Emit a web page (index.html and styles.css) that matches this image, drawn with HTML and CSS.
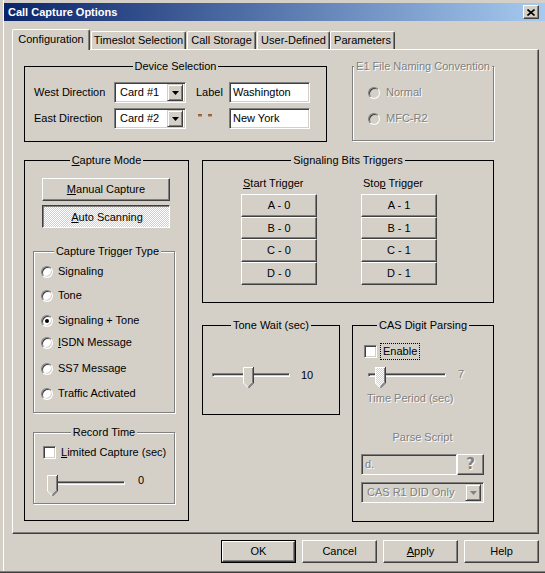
FILE: index.html
```html
<!DOCTYPE html>
<html>
<head>
<meta charset="utf-8">
<title>Call Capture Options</title>
<link rel="stylesheet" href="styles.css">
</head>
<body>
<div class="window">
  <div class="titlebar">
    <span class="title">Call Capture Options</span>
    <span class="close-btn"><svg width="8" height="7" viewBox="0 0 8 7"><path d="M0.5 0.5L7.5 6.5M7.5 0.5L0.5 6.5" stroke="#000" stroke-width="1.6"/></svg></span>
  </div>
  <div class="client">
    <div class="tabs">
      <div class="tab active">Configuration</div>
      <div class="tab w-ts">Timeslot Selection</div>
      <div class="tab w-cs">Call Storage</div>
      <div class="tab w-ud">User-Defined</div>
      <div class="tab w-pa">Parameters</div>
    </div>
    <div class="page">
      <div class="row-top">
        <div class="group black grp-device">
          <div class="gtitle">Device Selection</div>
          <div class="device-grid">
            <span class="lbl">West Direction</span>
            <div class="combo"><span class="combo-text">Card #1</span><span class="dd-btn"><svg width="7" height="4" viewBox="0 0 7 4"><path d="M0 0H7L3.5 4Z" fill="#000"/></svg></span></div>
            <span class="lbl lbl-label">Label</span>
            <div class="textbox">Washington</div>
            <span class="lbl">East Direction</span>
            <div class="combo"><span class="combo-text">Card #2</span><span class="dd-btn"><svg width="7" height="4" viewBox="0 0 7 4"><path d="M0 0H7L3.5 4Z" fill="#000"/></svg></span></div>
            <span class="lbl lbl-quote">"&nbsp;&nbsp;"</span>
            <div class="textbox">New York</div>
          </div>
        </div>
        <div class="group etched grp-e1">
          <div class="gtitle disabled">E1 File Naming Convention</div>
          <div class="opt e1-first"><span class="radio dis"></span><span class="disabled">Normal</span></div>
          <div class="opt e1-second"><span class="radio dis"></span><span class="disabled">MFC-R2</span></div>
        </div>
      </div>
      <div class="row-main">
        <div class="group black grp-capture">
          <div class="gtitle"><u>C</u>apture Mode</div>
          <div class="btn cm-btn cm-manual"><u>M</u>anual Capture</div>
          <div class="btn pushed cm-btn cm-auto"><span class="pushed-text"><u>A</u>uto Scanning</span></div>
          <div class="group etched grp-trigger">
            <div class="gtitle">Capture Trigger Type</div>
            <div class="opt tr r1"><span class="radio"></span><span>Signaling</span></div>
            <div class="opt tr r2"><span class="radio"></span><span>Tone</span></div>
            <div class="opt tr r3"><span class="radio checked"></span><span>Signaling + Tone</span></div>
            <div class="opt tr r4"><span class="radio"></span><span><u>I</u>SDN Message</span></div>
            <div class="opt tr r5"><span class="radio"></span><span>SS7 Message</span></div>
            <div class="opt tr r6"><span class="radio"></span><span>Traffic Activated</span></div>
          </div>
          <div class="group etched grp-record">
            <div class="gtitle">Record Time</div>
            <div class="opt rec-check"><span class="checkbox"></span><span><u>L</u>imited Capture (sec)</span></div>
            <div class="slider-row rec-slider">
              <div class="slider">
                <div class="track"></div>
                <svg class="thumb" style="left:0px" width="11" height="21" viewBox="0 0 11 21"><path d="M0 0H11V16L5.5 21.5L0 16Z" fill="#D4D0C8"/><path d="M0.5 16V0.5H10" stroke="#fff" fill="none"/><path d="M0.5 16L5 20.5" stroke="#fff" fill="none"/><path d="M10.5 0V16L5.5 21" stroke="#404040" fill="none"/><path d="M9.5 1V15.6L5.5 19.6" stroke="#808080" fill="none"/></svg>
              </div>
              <span class="slider-val rec-val">0</span>
            </div>
          </div>
        </div>
        <div class="col-right">
          <div class="group black grp-sig">
            <div class="gtitle">Signaling Bits Triggers</div>
            <div class="trig-cols">
              <div class="trig-col">
                <div class="trig-label"><u>S</u>tart Trigger</div>
                <div class="btn tb tb1">A - 0</div>
                <div class="btn tb tb2">B - 0</div>
                <div class="btn tb tb3">C - 0</div>
                <div class="btn tb tb4">D - 0</div>
              </div>
              <div class="trig-col">
                <div class="trig-label">Sto<u>p</u> Trigger</div>
                <div class="btn tb tb1">A - 1</div>
                <div class="btn tb tb2">B - 1</div>
                <div class="btn tb tb3">C - 1</div>
                <div class="btn tb tb4">D - 1</div>
              </div>
            </div>
          </div>
          <div class="row-low">
            <div class="group black grp-tone">
              <div class="gtitle">Tone Wait (sec)</div>
              <div class="slider-row tone-slider">
                <div class="slider">
                  <div class="track"></div>
                  <svg class="thumb" style="left:31px" width="11" height="21" viewBox="0 0 11 21"><path d="M0 0H11V16L5.5 21.5L0 16Z" fill="#D4D0C8"/><path d="M0.5 16V0.5H10" stroke="#fff" fill="none"/><path d="M0.5 16L5 20.5" stroke="#fff" fill="none"/><path d="M10.5 0V16L5.5 21" stroke="#404040" fill="none"/><path d="M9.5 1V15.6L5.5 19.6" stroke="#808080" fill="none"/></svg>
                </div>
                <span class="slider-val tone-val">10</span>
              </div>
            </div>
            <div class="group black grp-cas">
              <div class="gtitle">CAS Digit Parsing</div>
              <div class="opt cas-check"><span class="checkbox"></span><span class="focus">Enable</span></div>
              <div class="slider-row cas-slider">
                <div class="slider">
                  <div class="track"></div>
                  <svg class="thumb" style="left:7px" width="11" height="21" viewBox="0 0 11 21"><defs><pattern id="dith" width="2" height="2" patternUnits="userSpaceOnUse"><rect width="2" height="2" fill="#D4D0C8"/><rect width="1" height="1" fill="#fff"/><rect x="1" y="1" width="1" height="1" fill="#fff"/></pattern></defs><path d="M0 0H11V16L5.5 21.5L0 16Z" fill="url(#dith)"/><path d="M0.5 16V0.5H10" stroke="#fff" fill="none"/><path d="M0.5 16L5 20.5" stroke="#fff" fill="none"/><path d="M10.5 0V16L5.5 21" stroke="#404040" fill="none"/><path d="M9.5 1V15.6L5.5 19.6" stroke="#808080" fill="none"/></svg>
                </div>
                <span class="slider-val cas-val disabled">7</span>
              </div>
              <div class="cas-period disabled">Time Period (sec)</div>
              <div class="cas-parse disabled">Parse Script</div>
              <div class="cas-input">
                <div class="textbox dis-box"><span class="disabled">d.</span></div>
                <div class="btn qbtn"><span class="qmark">?</span></div>
              </div>
              <div class="combo dis-box cas-combo"><span class="combo-text disabled">CAS R1 DID Only</span><span class="dd-btn"><svg width="7" height="4" viewBox="0 0 7 4"><path d="M0 0H7L3.5 4Z" fill="#808080"/></svg></span></div>
            </div>
          </div>
        </div>
      </div>
    </div>
    <div class="buttons">
      <div class="default-wrap"><div class="btn dlg-btn">OK</div></div>
      <div class="btn dlg-btn">Cancel</div>
      <div class="btn dlg-btn"><u>A</u>pply</div>
      <div class="btn dlg-btn">Help</div>
    </div>
  </div>
</div>
</body>
</html>
```
FILE: styles.css
```css
html, body {
  margin: 0;
  padding: 0;
}
body {
  width: 545px;
  height: 573px;
  overflow: hidden;
  background: #D4D0C8;
  font-family: "Liberation Sans", Arial, sans-serif;
  font-size: 11px;
  line-height: 13px;
  color: #000;
}
u { text-decoration: underline; text-underline-offset: 1px; }

.window {
  box-sizing: border-box;
  width: 549px;
  height: 573px;
  padding: 3px 0 0 4px;
  background: #D4D0C8;
  box-shadow: inset 0 -1px #404040, inset 0 -2px #808080, inset 3px 0 #D4D0C8, inset 4px 0 #fff;
}
.titlebar {
  height: 18px;
  display: flex;
  align-items: center;
  justify-content: space-between;
  padding: 0 4px 0 4px;
  background: linear-gradient(to right, #0A246A, #A6CAF0);
  margin-right: 4px;
}
.title {
  color: #fff;
  font-weight: bold;
  font-size: 11px;
}
.close-btn {
  box-sizing: border-box;
  width: 16px;
  height: 14px;
  display: flex;
  align-items: center;
  justify-content: center;
  background: #D4D0C8;
  border: 1px solid;
  border-color: #fff #404040 #404040 #fff;
  box-shadow: inset -1px -1px #808080;
  margin-right: 2px;
}

.client {
  padding-top: 8px;
}
.tabs {
  display: flex;
  align-items: flex-end;
  height: 20px;
  padding-left: 8px;
}
.tab {
  box-sizing: border-box;
  height: 18px;
  border-top: 1px solid #fff;
  border-left: 1px solid #fff;
  border-right: 1px solid #404040;
  box-shadow: inset -1px 0 #808080;
  border-top-left-radius: 2px;
  border-top-right-radius: 2px;
  text-align: center;
  padding-top: 2px;
  background: #D4D0C8;
}
.tab.active {
  position: relative;
  z-index: 1;
  width: 78px;
  height: 21px;
  margin-bottom: -1px;
  padding-top: 3px;
}
.w-ts { width: 95px; margin-left: 1px; }
.w-cs { width: 69px; margin-left: 1px; }
.w-ud { width: 73px; margin-left: 1px; }
.w-pa { width: 65px; }

.page {
  box-sizing: border-box;
  width: 527px;
  height: 485px;
  margin-left: 8px;
  border-top: 1px solid #fff;
  border-left: 1px solid #fff;
  border-right: 1px solid #404040;
  border-bottom: 1px solid #404040;
  box-shadow: inset -1px -1px #808080;
  padding: 16px 0 0 11px;
}

/* group boxes */
.group {
  box-sizing: border-box;
  border: 1px solid #000;
}
.group.etched {
  border-color: #808080;
  box-shadow: inset 1px 1px #fff, 1px 1px #fff;
}
.gtitle {
  width: fit-content;
  margin: -7px auto 0;
  padding: 0 2px;
  background: #D4D0C8;
  line-height: 13px;
  white-space: nowrap;
}
.disabled {
  color: #808080;
  text-shadow: 1px 1px 0 #fff;
}

.row-top {
  display: flex;
  gap: 25px;
}
.grp-device { width: 303px; height: 76px; }
.grp-e1 { width: 142px; height: 75px; }

.device-grid {
  display: grid;
  grid-template-columns: 80px 72px 43px 81px;
  grid-template-rows: 21px 21px;
  row-gap: 5px;
  margin-top: 9px;
  padding-left: 9px;
  align-items: center;
}
.lbl { white-space: nowrap; }
.lbl-label { padding-left: 10px; }
.lbl-quote { padding-left: 12px; }

.combo, .textbox {
  box-sizing: border-box;
  height: 21px;
  border: 1px solid;
  border-color: #808080 #fff #fff #808080;
  box-shadow: inset 1px 1px #404040, inset -1px -1px #D4D0C8;
  background: #fff;
  display: flex;
  align-items: center;
  padding: 2px;
  white-space: nowrap;
}
.textbox { padding-left: 3px; }
.combo-text { flex: 1; padding-left: 3px; }
.dd-btn {
  box-sizing: border-box;
  width: 16px;
  height: 17px;
  background: #D4D0C8;
  border: 1px solid;
  border-color: #D4D0C8 #404040 #404040 #D4D0C8;
  box-shadow: inset 1px 1px #fff, inset -1px -1px #808080;
  display: flex;
  align-items: center;
  justify-content: center;
}
.dd-btn svg { display: block; }
.dis-box { background: #D4D0C8; }

/* options */
.opt {
  display: flex;
  align-items: center;
  height: 13px;
  white-space: nowrap;
}
.radio {
  box-sizing: border-box;
  width: 12px;
  height: 12px;
  border-radius: 50%;
  border: 1px solid;
  border-color: #808080 #fff #fff #808080;
  box-shadow: inset 1px 1px #404040, inset -1px -1px #D4D0C8;
  background: #fff;
  margin-right: 5px;
  display: flex;
  align-items: center;
  justify-content: center;
  flex: none;
}
.radio.dis { background: #D4D0C8; margin-right: 6px; }
.radio.checked::after {
  content: "";
  width: 4px;
  height: 4px;
  border-radius: 50%;
  background: #000;
}
.checkbox {
  box-sizing: border-box;
  width: 13px;
  height: 13px;
  border: 1px solid;
  border-color: #808080 #fff #fff #808080;
  box-shadow: inset 1px 1px #404040, inset -1px -1px #D4D0C8;
  background: #fff;
  margin-right: 5px;
  flex: none;
}
.focus {
  outline: 1px dotted #000;
  outline-offset: 1px;
  padding: 0 1px;
}

.e1-first { margin-top: 13px; padding-left: 15px; }
.e1-second { margin-top: 13px; padding-left: 15px; }

/* buttons */
.btn {
  box-sizing: border-box;
  background: #D4D0C8;
  border: 1px solid;
  border-color: #fff #404040 #404040 #fff;
  box-shadow: inset -1px -1px #808080;
  display: flex;
  align-items: center;
  justify-content: center;
  white-space: nowrap;
}
.btn.pushed {
  border-color: #404040 #fff #fff #404040;
  box-shadow: inset 1px 1px #808080;
  background-color: #D4D0C8;
  background-image: conic-gradient(#fff 25%, #D4D0C8 0 50%, #fff 0 75%, #D4D0C8 0);
  background-size: 2px 2px;
}
.pushed-text {
  position: relative;
  left: 1px;
  top: 1px;
  background: transparent;
}

.row-main {
  display: flex;
  margin-top: 18px;
}
.grp-capture { width: 165px; height: 361px; }
.cm-btn { width: 128px; height: 23px; margin-left: 17px; }
.cm-manual { margin-top: 11px; }
.cm-auto { margin-top: 4px; }
.grp-trigger { width: 142px; height: 162px; margin-top: 23px; margin-left: 8px; padding-left: 7px; }
.tr { }
.r1 { margin-top: 7px; }
.r2 { margin-top: 11px; }
.r3 { margin-top: 12px; }
.r4 { margin-top: 9px; }
.r5 { margin-top: 13px; }
.r6 { margin-top: 12px; }

.grp-record { width: 142px; height: 72px; margin-top: 19px; margin-left: 8px; }
.rec-check { margin-top: 7px; padding-left: 9px; }

.slider-row {
  display: flex;
  align-items: flex-start;
}
.slider {
  position: relative;
  width: 78px;
  height: 21px;
}
.track {
  box-sizing: border-box;
  height: 4px;
  margin-top: 6px;
  border: 1px solid;
  border-color: #808080 #fff #fff #808080;
  box-shadow: inset 1px 1px #404040, inset -1px -1px #D4D0C8;
}
.thumb {
  position: absolute;
  top: 0;
  display: block;
}
.slider-val { line-height: 13px; }
.rec-slider { margin-top: 16px; padding-left: 13px; }
.rec-val { margin-left: 13px; margin-top: -1px; }

.col-right { margin-left: 13px; }
.grp-sig { width: 292px; height: 143px; }
.trig-cols {
  display: flex;
  gap: 44px;
  margin-top: 10px;
  padding-left: 38px;
}
.trig-col { width: 76px; }
.trig-label { padding-left: 2px; margin-bottom: 4px; }
.tb { width: 76px; height: 23px; }
.tb2 { height: 22px; }

.row-low {
  display: flex;
  align-items: flex-start;
  margin-top: 22px;
}
.grp-tone { width: 138px; height: 90px; }
.tone-slider { margin-top: 35px; padding-left: 9px; }
.tone-val { margin-left: 11px; margin-top: 2px; }

.grp-cas { width: 142px; height: 197px; margin-left: 12px; }
.cas-check { margin-top: 13px; padding-left: 11px; }
.cas-slider { margin-top: 9px; padding-left: 15px; }
.cas-val { margin-left: 12px; margin-top: 1px; }
.cas-period { margin-top: 4px; padding-left: 14px; }
.cas-parse { margin-top: 26px; margin-left: 8px; width: 123px; text-align: center; }
.cas-input {
  display: flex;
  margin-top: 10px;
  margin-left: 8px;
}
.cas-input .textbox { width: 96px; }
.qbtn { width: 27px; height: 21px; }
.qmark {
  font-family: "DejaVu Sans", sans-serif;
  font-weight: bold;
  font-size: 15px;
  line-height: 15px;
  color: #808080;
  text-shadow: 1px 1px 0 #fff;
}
.cas-combo { width: 123px; margin-top: 7px; margin-left: 8px; }

.buttons {
  display: flex;
  justify-content: flex-end;
  gap: 6px;
  width: 527px;
  margin-left: 8px;
  margin-top: 6px;
}
.dlg-btn { width: 75px; height: 23px; }
.default-wrap { border: 1px solid #000; box-sizing: border-box; width: 75px; height: 23px; }
.default-wrap .dlg-btn { width: 73px; height: 21px; }
```
